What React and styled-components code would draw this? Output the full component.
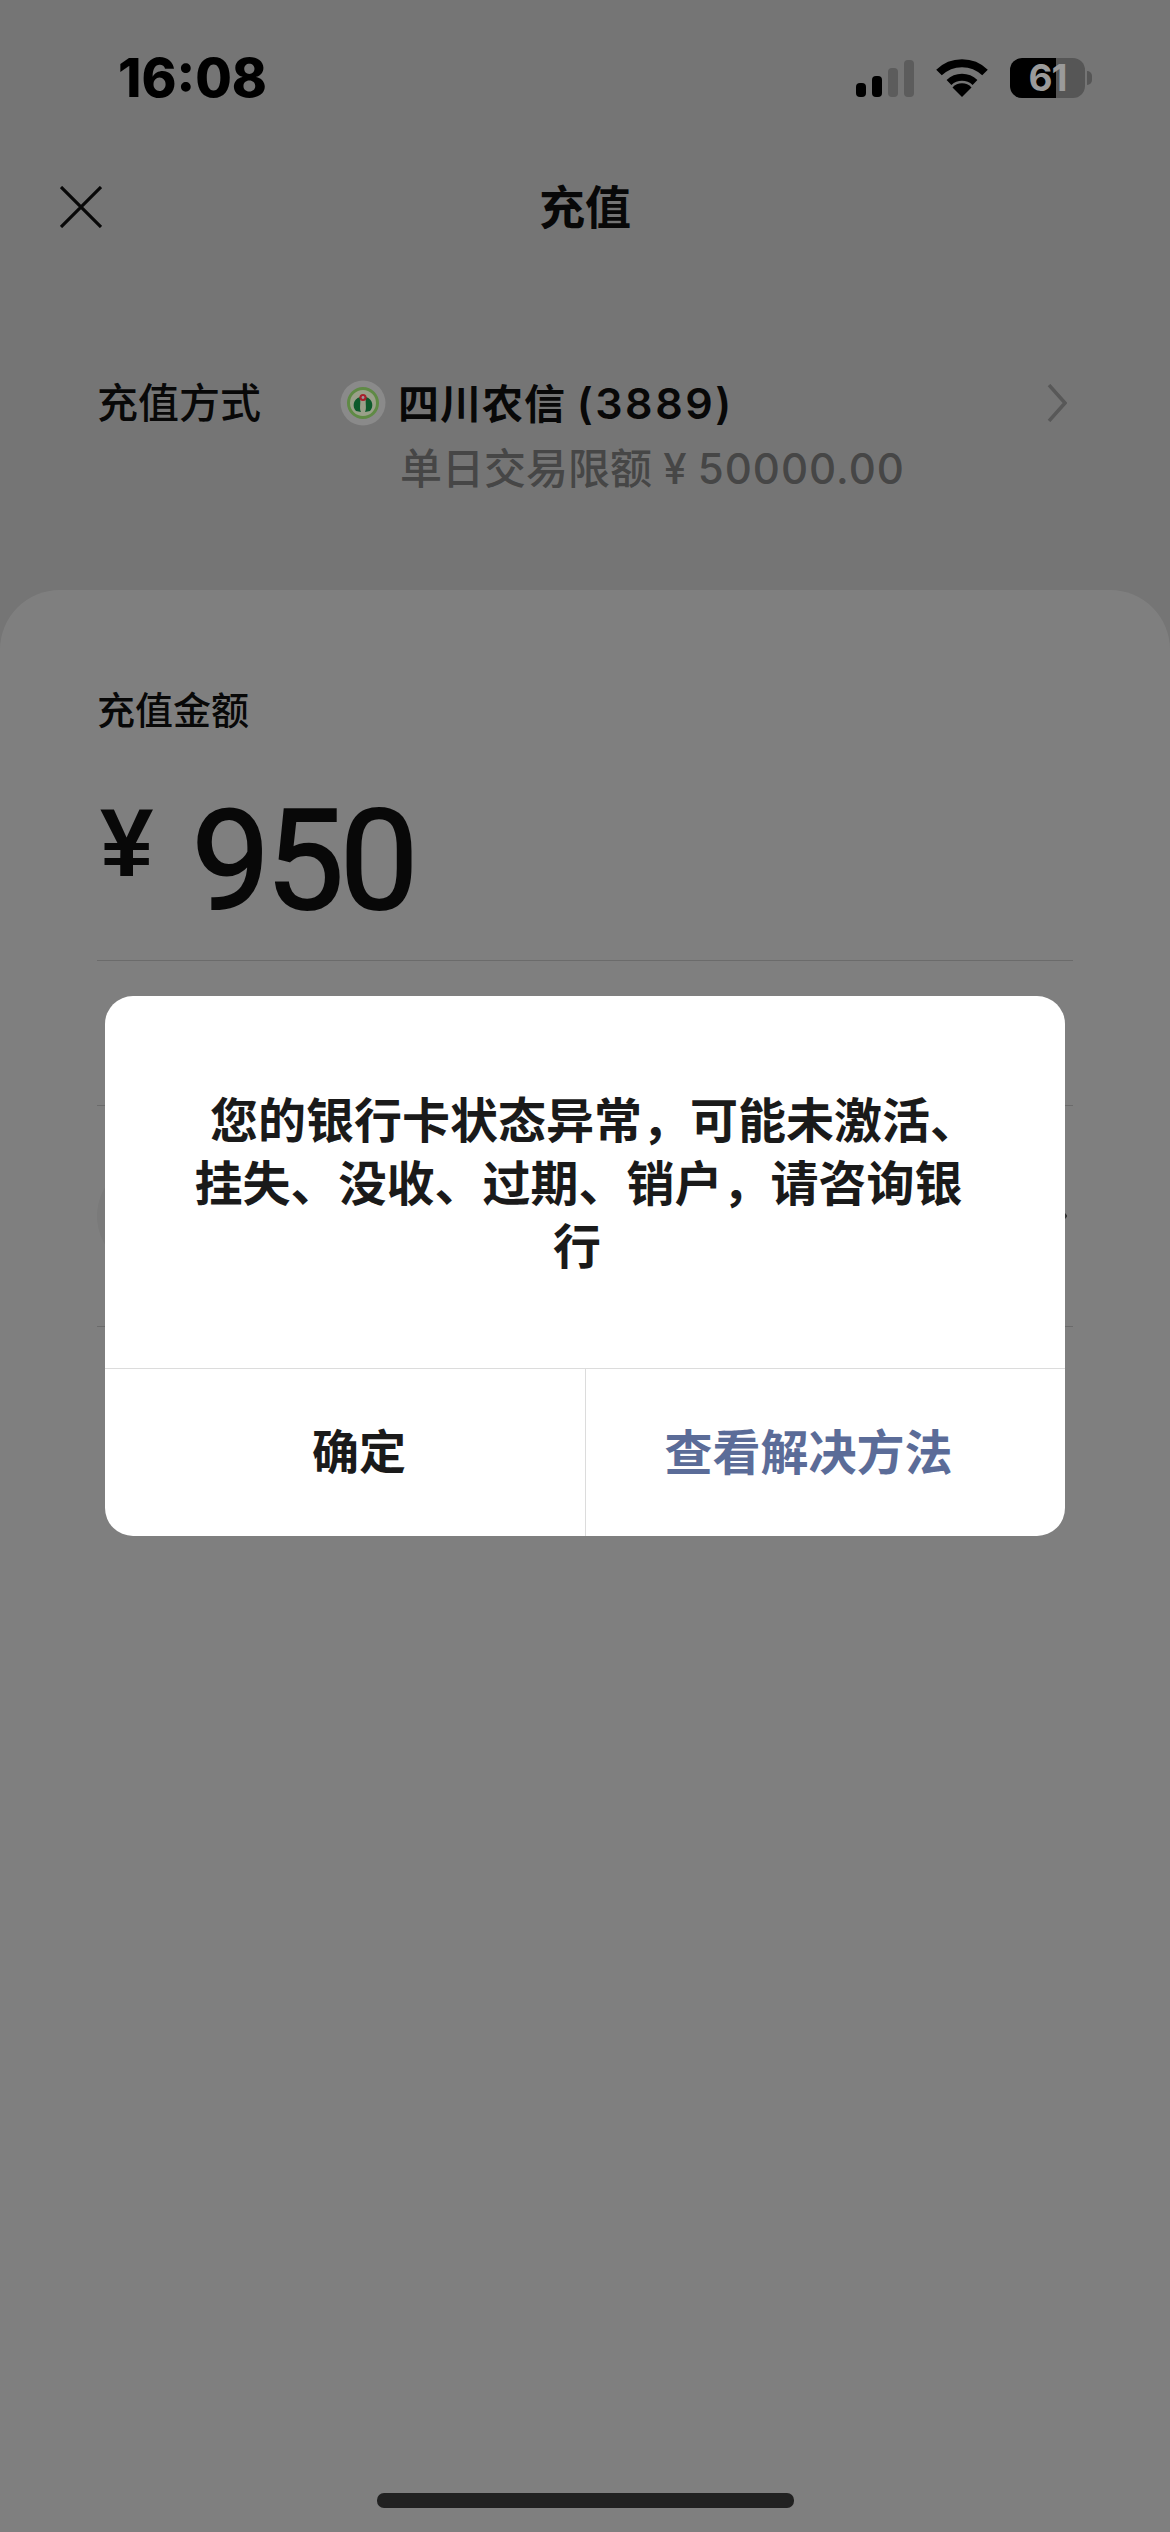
import React from "react";
import styled, { createGlobalStyle } from "styled-components";

const SANS = `Inter, "Noto Sans CJK SC", sans-serif`;

function SignalBars() {
  return (
    <Signal>
      <Bar $h={14} />
      <Bar $h={21} />
      <Bar $h={29} $off />
      <Bar $h={37} $off />
    </Signal>
  );
}

function WifiIcon() {
  return (
    <svg width="52" height="38" viewBox="0 0 52 38" fill="none">
      <path d="M3 13.5 A33 33 0 0 1 49 13.5" stroke="#000" strokeWidth="8" />
      <path d="M13 23.5 A19 19 0 0 1 39 23.5" stroke="#000" strokeWidth="7" />
      <path d="M26 38 L16.5 28.5 A13 13 0 0 1 35.5 28.5 Z" fill="#000" />
    </svg>
  );
}

function BankLogo() {
  return (
    <LogoBadge width="46" height="46" viewBox="0 0 46 46">
      <circle cx="23" cy="23" r="22.5" fill="#8a8a8a" />
      <circle cx="23" cy="23" r="14.5" fill="#9aa08a" stroke="#5f8a45" strokeWidth="3" />
      <path d="M20 17 C13 19 12 27 16 31 L21 32 C19 28 21 24 20 17 Z" fill="#0d5a2c" />
      <path d="M26 17 C33 19 34 27 30 31 L25 32 C27 28 25 24 26 17 Z" fill="#0d5a2c" />
      <circle cx="23" cy="17.5" r="3.6" fill="#a8202c" />
      <circle cx="23" cy="17.5" r="1.4" fill="#9a9a9a" />
    </LogoBadge>
  );
}

function App() {
  return (
    <Page>
      <GlobalStyle />
      <StatusBar>
        <Time>16:08</Time>
        <StatusIcons>
          <SignalBars />
          <WifiIcon />
          <Battery>
            <BatteryBody>61</BatteryBody>
            <BatteryTip />
          </Battery>
        </StatusIcons>
      </StatusBar>

      <NavBar>
        <CloseButton>
          <svg width="42" height="42" viewBox="0 0 42 42" fill="none" stroke="#111" strokeWidth="3.2">
            <path d="M1 1 L41 41 M41 1 L1 41" />
          </svg>
        </CloseButton>
        <Title>充值</Title>
      </NavBar>

      <MethodRow>
        <MethodLabel>充值方式</MethodLabel>
        <MethodBody>
          <BankLine>
            <BankLogo />
            <BankName>
              四川农信 <CardTail>(3889)</CardTail>
            </BankName>
          </BankLine>
          <BankLimit>
            单日交易限额 ¥ <LimitValue>50000.00</LimitValue>
          </BankLimit>
        </MethodBody>
        <Chevron viewBox="0 0 20 38" fill="none" stroke="#b0b0b0" strokeWidth="3.5">
          <path d="M2 1 L18 19 L2 37" />
        </Chevron>
      </MethodRow>

      <Sheet>
        <AmountLabel>充值金额</AmountLabel>
        <AmountRow>
          <Currency>¥</Currency>
          <Amount>950</Amount>
        </AmountRow>
        <HiddenRow $h={145} />
        <HiddenRow $h={221}>
          <HiddenCircle />
          <HiddenArrow viewBox="0 0 20 38" fill="none" stroke="#666" strokeWidth="4">
            <path d="M2 1 L18 19 L2 37" />
          </HiddenArrow>
        </HiddenRow>
      </Sheet>

      <HomeIndicator />

      <Overlay>
        <Dialog>
          <DialogText>
            <DialogLine $left={18}>您的银行卡状态异常，可能未激活、</DialogLine>
            <DialogLine $right={13}>挂失、没收、过期、销户，请咨询银</DialogLine>
            <DialogLine $right={16}>行</DialogLine>
          </DialogText>
          <DialogActions>
            <DialogButton $left={28}>确定</DialogButton>
            <DialogButton $right={34} $primary>查看解决方法</DialogButton>
          </DialogActions>
        </Dialog>
      </Overlay>
    </Page>
  );
}

const GlobalStyle = createGlobalStyle`
  html, body {
    margin: 0;
    padding: 0;
    background: #ebebeb;
  }
  * {
    box-sizing: border-box;
  }
`;

const Page = styled.div`
  position: relative;
  width: 1170px;
  height: 2532px;
  overflow: hidden;
  display: flex;
  flex-direction: column;
  background: #ebebeb;
  font-family: ${SANS};
  color: #111;
`;

const StatusBar = styled.div`
  position: relative;
  z-index: 2;
  height: 110px;
  padding: 0 78px 13px 118px;
  display: flex;
  align-items: flex-end;
  justify-content: space-between;
`;

const Time = styled.div`
  margin-bottom: -7px;
  font-size: 53px;
  line-height: 52px;
  font-weight: 800;
  color: #000;
`;

const StatusIcons = styled.div`
  display: flex;
  align-items: flex-end;
  gap: 22px;
`;

const Signal = styled.div`
  display: flex;
  align-items: flex-end;
  gap: 6px;
`;

const Bar = styled.div`
  width: 10px;
  height: ${(p) => p.$h}px;
  border-radius: 4px;
  background: ${(p) => (p.$off ? "#5c5c5c" : "#000")};
`;

const Battery = styled.div`
  display: flex;
  align-items: center;
  gap: 2px;
  margin-bottom: -1px;
`;

const BatteryBody = styled.div`
  width: 75px;
  height: 40px;
  border-radius: 12px;
  background: linear-gradient(to right, #000 0 46px, #565656 46px);
  color: #9a9a9a;
  font-size: 37px;
  font-weight: 700;
  letter-spacing: -1px;
  line-height: 40px;
  text-align: center;
`;

const BatteryTip = styled.div`
  width: 5px;
  height: 14px;
  border-radius: 0 6px 6px 0;
  background: #565656;
`;

const NavBar = styled.div`
  height: 194px;
  padding-left: 60px;
  display: flex;
  align-items: center;
  position: relative;
`;

const CloseButton = styled.div`
  width: 42px;
  height: 42px;
  line-height: 0;
`;

const Title = styled.div`
  position: absolute;
  left: 0;
  right: 0;
  text-align: center;
  font-size: 46px;
  font-weight: 700;
  line-height: 60px;
`;

const MethodRow = styled.div`
  height: 286px;
  padding: 70px 103px 0 97px;
  display: flex;
  align-items: flex-start;
`;

const MethodLabel = styled.div`
  width: 243px;
  font-size: 41px;
  font-weight: 500;
  line-height: 58px;
`;

const MethodBody = styled.div`
  flex: 1;
  display: flex;
  flex-direction: column;
`;

const BankLine = styled.div`
  display: flex;
  align-items: center;
  height: 58px;
  gap: 12px;
`;

/* the badge keeps its own colours, it sits above the dim layer */
const LogoBadge = styled.svg`
  position: relative;
  z-index: 2;
  flex: none;
`;

const BankName = styled.div`
  font-size: 41px;
  font-weight: 700;
  letter-spacing: 1px;
  line-height: 58px;
  white-space: nowrap;
`;

const CardTail = styled.span`
  font-size: 43px;
  font-weight: 600;
  letter-spacing: 2.5px;
`;

const BankLimit = styled.div`
  margin: 8px 0 0 60px;
  font-size: 42px;
  font-weight: 500;
  line-height: 58px;
  color: #8c8c8c;
  white-space: nowrap;
`;

const LimitValue = styled.span`
  letter-spacing: 1px;
`;

const Chevron = styled.svg`
  width: 20px;
  height: 38px;
  margin-top: 10px;
`;

const Sheet = styled.div`
  flex: 1;
  padding: 93px 97px 0;
  background: #fff;
  border-radius: 60px 60px 0 0;
  display: flex;
  flex-direction: column;
`;

const AmountLabel = styled.div`
  font-size: 38px;
  font-weight: 500;
  line-height: 54px;
`;

const AmountRow = styled.div`
  height: 224px;
  padding-top: 54px;
  display: flex;
  align-items: flex-start;
  gap: 38px;
  border-bottom: 1px solid #d6d6d6;
`;

const Currency = styled.div`
  padding-left: 3px;
  font-family: "Liberation Sans", sans-serif;
  font-size: 96px;
  line-height: 104px;
  font-weight: 700;
`;

const Amount = styled.div`
  font-family: Roboto, sans-serif;
  font-size: 140px;
  line-height: 140px;
  font-weight: 400;
  letter-spacing: -4.5px;
  -webkit-text-stroke: 2px #111;
`;

const HiddenRow = styled.div`
  height: ${(p) => p.$h}px;
  padding-right: 6px;
  display: flex;
  align-items: center;
  justify-content: space-between;
  border-bottom: 1px solid #d6d6d6;
`;

const HiddenCircle = styled.div`
  width: 110px;
  height: 110px;
  border-radius: 50%;
  background: #f4f4f4;
`;

const HiddenArrow = styled.svg`
  width: 20px;
  height: 38px;
`;

const HomeIndicator = styled.div`
  position: absolute;
  left: 377px;
  bottom: 24px;
  width: 417px;
  height: 15px;
  border-radius: 7px;
  background: #424242;
`;

const Overlay = styled.div`
  position: absolute;
  inset: 0;
  display: flex;
  align-items: center;
  justify-content: center;
  background: rgba(0, 0, 0, 0.5);
  z-index: 1;
`;

const Dialog = styled.div`
  width: 960px;
  height: 540px;
  border-radius: 28px;
  background: #fff;
  display: flex;
  flex-direction: column;
  overflow: hidden;
`;

const DialogText = styled.div`
  flex: 1;
  padding-top: 93px;
  color: #1a1a1a;
`;

const DialogLine = styled.div`
  margin-left: ${(p) => p.$left || 0}px;
  margin-right: ${(p) => p.$right || 0}px;
  font-size: 48px;
  line-height: 63px;
  font-weight: 700;
  text-align: center;
  white-space: nowrap;
`;

const DialogActions = styled.div`
  height: 168px;
  display: grid;
  grid-template-columns: 480px 480px;
  border-top: 1px solid #dcdcdc;
`;

const DialogButton = styled.div`
  padding: 0 ${(p) => p.$right || 0}px 8px ${(p) => p.$left || 0}px;
  display: flex;
  align-items: center;
  justify-content: center;
  font-size: ${(p) => (p.$primary ? 48 : 47)}px;
  font-weight: 700;
  color: ${(p) => (p.$primary ? "#5b6c98" : "#1a1a1a")};
  & + & {
    border-left: 1px solid #dcdcdc;
  }
`;

export default App;
